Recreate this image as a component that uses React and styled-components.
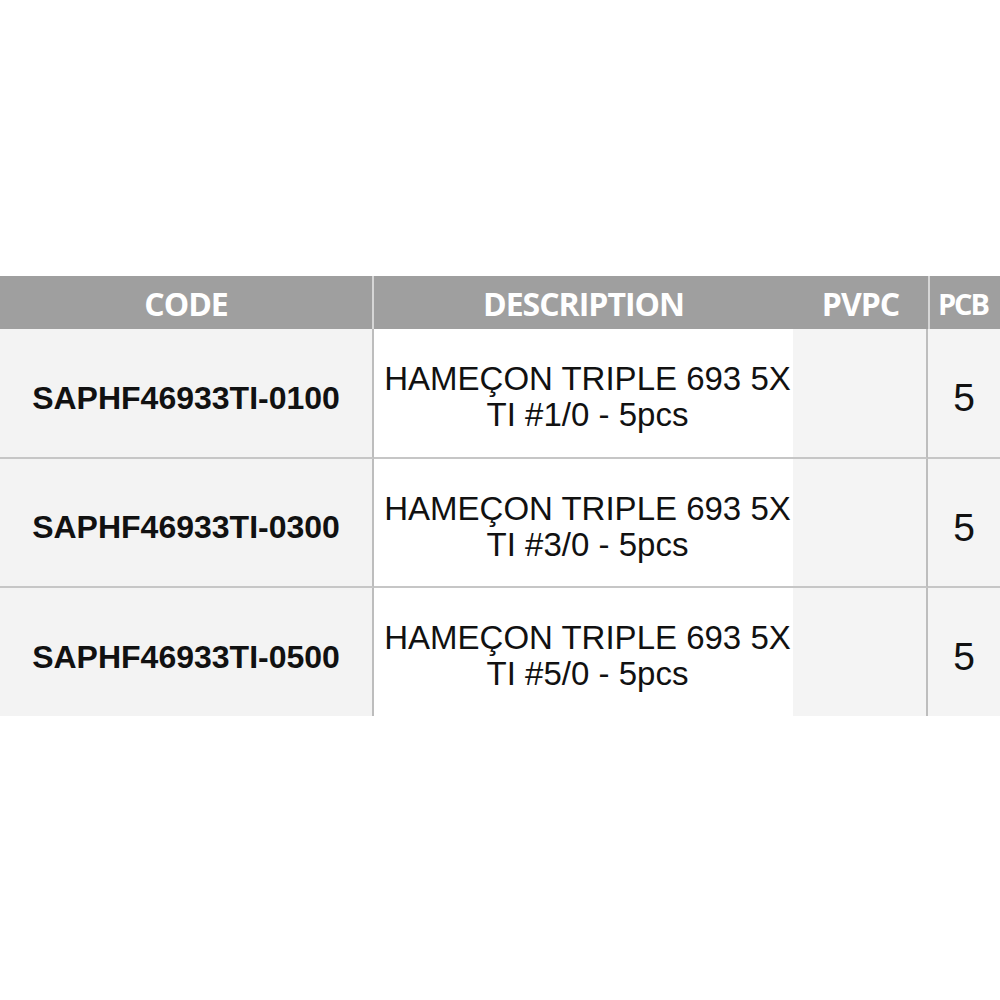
import React from 'react';
import styled, { createGlobalStyle } from 'styled-components';

const rows = [
  { code: 'SAPHF46933TI-0100', size: '#1/0', pcb: 5 },
  { code: 'SAPHF46933TI-0300', size: '#3/0', pcb: 5 },
  { code: 'SAPHF46933TI-0500', size: '#5/0', pcb: 5 },
];

const App = () => {
  return (
    <>
      <GlobalStyle />
      <Page>
        <Table>
          <HeadCell $line>CODE</HeadCell>
          <HeadCell>DESCRIPTION</HeadCell>
          <HeadCell>PVPC</HeadCell>
          <HeadCell $last $small>PCB</HeadCell>
          {rows.map((r, i) => (
            <React.Fragment key={r.code}>
              <CodeCell $bottom={i < rows.length - 1}>{r.code}</CodeCell>
              <DescCell $bottom={i < rows.length - 1}>
                <DescLine>HAMEÇON TRIPLE 693 5X</DescLine>
                <DescLine>TI {r.size} - 5pcs</DescLine>
              </DescCell>
              <PriceCell $bottom={i < rows.length - 1} />
              <PcbCell $bottom={i < rows.length - 1}>{r.pcb}</PcbCell>
            </React.Fragment>
          ))}
        </Table>
      </Page>
    </>
  );
};

export default App;

const GlobalStyle = createGlobalStyle`
  html, body {
    margin: 0;
    padding: 0;
    background: #ffffff;
  }
`;

const Page = styled.div`
  width: 1000px;
  height: 1000px;
  padding-top: 276px;
  box-sizing: border-box;
  background: #ffffff;
`;

const Table = styled.div`
  display: grid;
  grid-template-columns: 374px 419px 135px 72px;
  grid-template-rows: 53px 130px 129px 128px;
`;

const HeadCell = styled.div`
  display: flex;
  align-items: center;
  justify-content: center;
  padding-top: 2px;
  padding-right: ${(p) => (p.$small ? '4px' : '0')};
  background: #9f9f9f;
  color: #ffffff;
  font-family: 'Open Sans', sans-serif;
  font-weight: 700;
  font-size: ${(p) => (p.$small ? '29px' : '32px')};
  letter-spacing: ${(p) => (p.$small ? '-2px' : '-1px')};
  border-right: ${(p) => (p.$line ? '2px solid #d6d6d6' : 'none')};
  border-left: ${(p) => (p.$last ? '2px solid #d6d6d6' : 'none')};
  box-sizing: border-box;
`;

const BodyCell = styled.div`
  display: flex;
  align-items: center;
  justify-content: center;
  padding-top: 8px;
  box-sizing: border-box;
  color: #111111;
  font-family: 'Liberation Sans', Arial, sans-serif;
  border-bottom: ${(p) => (p.$bottom ? '2px solid #c6c6c6' : 'none')};
`;

const CodeCell = styled(BodyCell)`
  background: #f3f3f3;
  border-right: 2px solid #bdbdbd;
  font-weight: 700;
  font-size: 32px;
  padding-top: 10px;
`;

const DescCell = styled(BodyCell)`
  flex-direction: column;
  background: #ffffff;
  padding-left: 8px;
`;

const DescLine = styled.div`
  font-size: 33px;
  line-height: 36px;
  white-space: nowrap;
`;

const PriceCell = styled(BodyCell)`
  background: #f4f4f4;
  border-right: 2px solid #bdbdbd;
`;

const PcbCell = styled(BodyCell)`
  background: #f4f4f4;
  font-size: 39px;
  padding-top: 10px;
`;
